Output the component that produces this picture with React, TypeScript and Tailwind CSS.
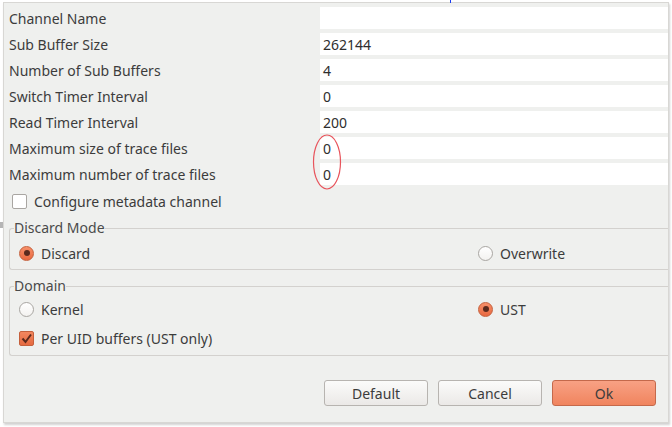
import React from 'react'

const rows: [string, string][] = [
  ['Channel Name', ''],
  ['Sub Buffer Size', '262144'],
  ['Number of Sub Buffers', '4'],
  ['Switch Timer Interval', '0'],
  ['Read Timer Interval', '200'],
  ['Maximum size of trace files', '0'],
  ['Maximum number of trace files', '0'],
]

const Radio = ({ checked }: { checked?: boolean }) =>
  checked ? (
    <span className="w-[15px] h-[15px] rounded-full border border-[#c5603c] bg-gradient-to-b from-[#f7906a] to-[#e8683f] flex items-center justify-center">
      <span className="w-[6px] h-[6px] rounded-full bg-[#5b2a1d]" />
    </span>
  ) : (
    <span className="w-[15px] h-[15px] rounded-full border border-[#a9a6a2] bg-gradient-to-b from-white to-[#f3f2f0]" />
  )

const CheckBox = ({ checked }: { checked?: boolean }) =>
  checked ? (
    <span className="w-[15px] h-[15px] rounded-[2px] border border-[#c5603c] bg-gradient-to-b from-[#f3875f] to-[#e56a40] flex items-center justify-center">
      <svg width="13" height="13" viewBox="0 0 13 13">
        <path d="M2.5 6.5 L5.5 10 L11 2.5" fill="none" stroke="#5b2a1d" strokeWidth="2" />
      </svg>
    </span>
  ) : (
    <span className="w-[15px] h-[15px] rounded-[2px] border border-[#a9a6a2] bg-white" />
  )

const Group = ({ title, children }: { title: string; children: React.ReactNode }) => (
  <fieldset className="ml-[5px] border border-r-0 border-[#d3d1ce] rounded-l-[3px] pl-[9px]">
    <legend className="ml-[-5px] px-0 text-[14px] leading-[16px] text-[#4a4a4a]">{title}</legend>
    {children}
  </fieldset>
)

const Option = ({ label, radio, checked }: { label: string; radio?: boolean; checked?: boolean }) => (
  <div className="flex items-center gap-[7px] h-[22px]">
    {radio ? <Radio checked={checked} /> : <CheckBox checked={checked} />}
    <span>{label}</span>
  </div>
)

export default function App() {
  return (
    <div className="relative w-[672px] h-[427px] bg-white text-[14px] text-[#3c3c3c] font-['Noto_Sans',sans-serif] pl-[3px] pt-[2px]">
      <div className="absolute left-[450px] top-0 w-[1px] h-[3px] bg-[#1a3cf0]" />
      <div className="absolute left-0 top-[222px] w-[3px] h-[6px] bg-[#b5b5b5]" />

      <div className="w-[666px] h-[421px] bg-[#eff0ee] border border-[#d8d7d4] shadow-[1px_2px_2px_rgba(0,0,0,0.18)] flex flex-col overflow-hidden">
        {/* Settings rows */}
        <div className="flex flex-col gap-[4px] pt-[4px]">
          {rows.map(([label, value]) => (
            <div key={label} className="flex items-center h-[22px]">
              <span className="w-[316px] pl-[5px]">{label}</span>
              <div className="flex-1 h-full bg-white flex items-center pl-[3px] text-[#2e2e2e]">{value}</div>
            </div>
          ))}
        </div>

        <div className="ml-[8px] mt-[5px]">
          <Option label="Configure metadata channel" />
        </div>

        {/* Discard Mode */}
        <div className="mt-[8px]">
          <Group title="Discard Mode">
            <div className="flex items-center pt-[6px] pb-[5px]">
              <div className="w-[459px]">
                <Option label="Discard" radio checked />
              </div>
              <Option label="Overwrite" radio />
            </div>
          </Group>
        </div>

        {/* Domain */}
        <div className="mt-[8px]">
          <Group title="Domain">
            <div className="flex items-center pt-[4px]">
              <div className="w-[459px]">
                <Option label="Kernel" radio />
              </div>
              <Option label="UST" radio checked />
            </div>
            <div className="mt-[7px] mb-[6px]">
              <Option label="Per UID buffers (UST only)" checked />
            </div>
          </Group>
        </div>

        {/* Buttons */}
        <div className="flex justify-end gap-[10px] pr-[12px] mt-[24px]">
          <button className="w-[104px] h-[26px] rounded-[3px] border border-[#b7b4b0] bg-gradient-to-b from-[#fbfbfa] to-[#ebe9e7]">Default</button>
          <button className="w-[104px] h-[26px] rounded-[3px] border border-[#b7b4b0] bg-gradient-to-b from-[#fbfbfa] to-[#ebe9e7]">Cancel</button>
          <button className="w-[104px] h-[26px] rounded-[3px] border border-[#c4694b] bg-gradient-to-b from-[#f8a184] to-[#f0845e]">Ok</button>
        </div>
      </div>

      {/* red annotation ellipse */}
      <svg className="absolute left-[311px] top-[132px]" width="32" height="60" viewBox="0 0 32 60">
        <ellipse cx="16" cy="30" rx="13.5" ry="27" fill="none" stroke="#e8545c" strokeWidth="1.2" />
      </svg>
    </div>
  )
}
